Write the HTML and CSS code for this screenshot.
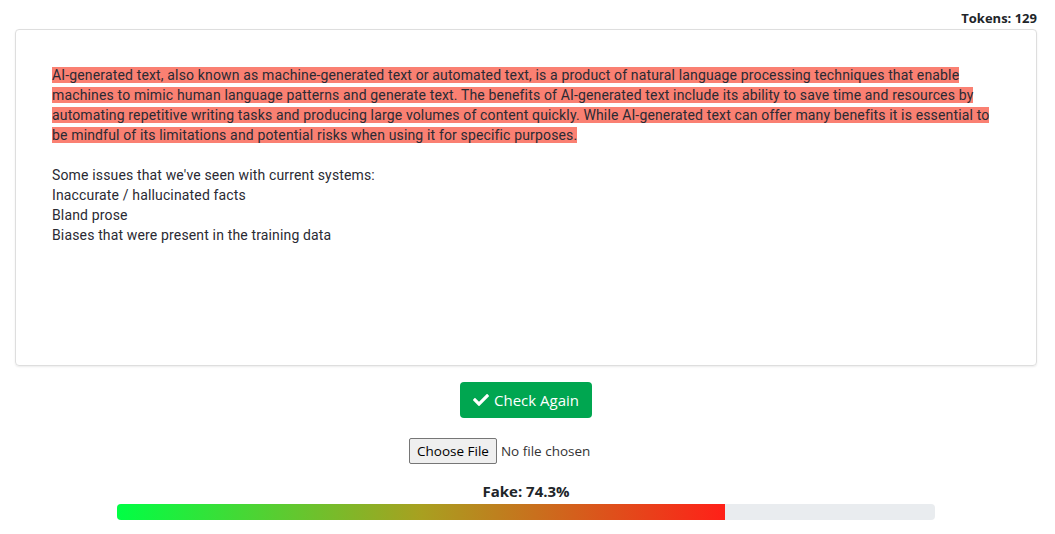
FILE: index.html
```html
<!DOCTYPE html>
<html>
<head>
<meta charset="utf-8">
<link rel="stylesheet" href="styles.css">
</head>
<body>
<div class="page">
  <div class="tokens">Tokens: 129</div>
  <div class="card">
    <div class="editor">
      <span class="hl">AI-generated text, also known as machine-generated text or automated text, is a product of natural language processing techniques that enable machines to mimic human language patterns and generate text. The benefits of AI-generated text include its ability to save time and resources by automating repetitive writing tasks and producing large volumes of content quickly. While AI-generated text can offer many benefits it is essential to be mindful of its limitations and potential risks when using it for specific purposes.</span><br><br>Some issues that we've seen with current systems:<br>Inaccurate / hallucinated facts<br>Bland prose<br>Biases that were present in the training data
    </div>
  </div>
  <div class="actions">
    <button class="btn-check" type="button">
      <svg class="check" viewBox="0 0 512 512" width="16" height="16"><path fill="#fff" d="M173.9 439.4l-166.4-166.4c-10-10-10-26.2 0-36.2l36.2-36.2c10-10 26.2-10 36.2 0L192 312.7 432.1 72.6c10-10 26.2-10 36.2 0l36.2 36.2c10 10 10 26.2 0 36.2L210.1 439.4c-10 10-26.2 10-36.2 0z"/></svg>
      <span>Check Again</span>
    </button>
    <input class="file" type="file">
    <div class="result">
      <div class="label">Fake: 74.3%</div>
      <div class="bar"><div class="fill" style="width:74.3%"></div></div>
    </div>
  </div>
</div>
</body>
</html>
```
FILE: styles.css
```css
html, body {
  margin: 0;
  background: #fff;
}
body {
  font-family: "Open Sans", "Noto Sans", sans-serif;
  color: #212529;
}
.page {
  padding: 10px 18px 0 15px;
}
.tokens {
  text-align: right;
  font-weight: 700;
  font-size: 13px;
  line-height: 16px;
  height: 19px;
  color: #212529;
}
.card {
  box-sizing: border-box;
  height: 337px;
  border: 1px solid #dedede;
  border-radius: 4px;
  box-shadow: 0 1px 2px rgba(0,0,0,0.08);
  padding: 35px 36px;
}
.editor {
  font-family: Roboto, sans-serif;
  font-size: 14px;
  line-height: 20px;
  letter-spacing: 0.15px;
  color: #2a2a33;
}
.hl {
  background: #fa8072;
}
.actions {
  display: flex;
  flex-direction: column;
  align-items: center;
  padding-top: 16px;
}
.btn-check {
  display: flex;
  align-items: center;
  gap: 5px;
  height: 36px;
  padding: 0 13px;
  background: #00a650;
  color: #fff;
  border: none;
  border-radius: 4px;
  font-family: "Open Sans", sans-serif;
  font-size: 15px;
}
.file {
  margin-top: 20px;
  width: 234px;
  font-family: "Open Sans", sans-serif;
  font-size: 13.5px;
  color: #333;
}
.file::file-selector-button {
  font-family: "Open Sans", sans-serif;
  font-size: 13.5px;
  height: 26px;
  padding: 0 7px;
  background: #efefef;
  border: 1px solid #767676;
  border-radius: 2px;
  color: #000;
  margin-right: 4px;
}
.result {
  width: 80%;
  margin-top: 18px;
  display: flex;
  flex-direction: column;
  align-items: center;
}
.label {
  font-weight: 700;
  font-size: 15px;
  line-height: 18px;
  margin-bottom: 4px;
}
.bar {
  width: 100%;
  height: 16px;
  background: #e9ecef;
  border-radius: 4px;
  overflow: hidden;
}
.fill {
  height: 100%;
  background: linear-gradient(to right, #00ff44, #a8a020 50%, #ff2018);
}
```
